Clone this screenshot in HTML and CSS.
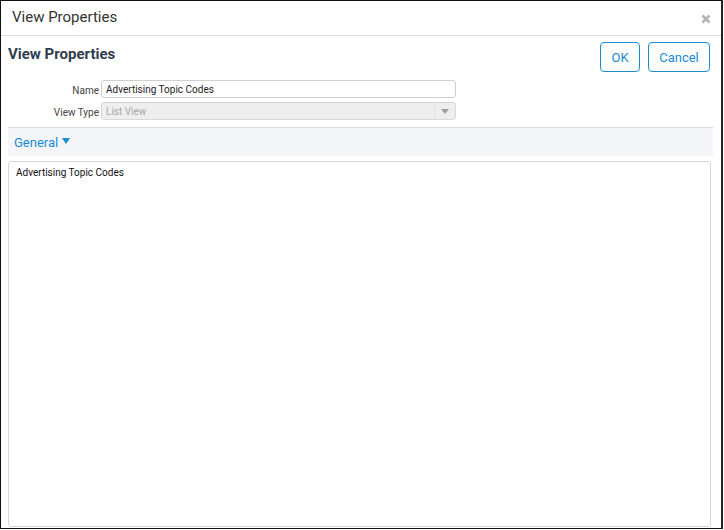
FILE: index.html
```html
<!DOCTYPE html>
<html>
<head>
<meta charset="utf-8">
<link rel="stylesheet" href="styles.css">
</head>
<body>
<div class="dialog">
  <div class="titlebar">
    <span class="title">View Properties</span>
    <span class="close"><svg width="10" height="10" viewBox="0 0 10 10"><path d="M1.5 1.5L8.5 8.5M8.5 1.5L1.5 8.5" stroke="#b3b3b3" stroke-width="2.6" stroke-linecap="butt"/></svg></span>
  </div>
  <div class="content">
    <div class="head">
      <h1 class="heading">View Properties</h1>
      <div class="actions">
        <button class="btn ok">OK</button>
        <button class="btn cancel">Cancel</button>
      </div>
    </div>
    <div class="form">
      <div class="row">
        <label class="label">Name</label>
        <div class="input">Advertising Topic Codes</div>
      </div>
      <div class="row">
        <label class="label">View Type</label>
        <div class="select">
          <span class="sel-text">List View</span>
          <span class="sel-arrow"><svg width="8" height="5" viewBox="0 0 8 5"><path d="M0 0h8L4 5z" fill="#a0a0a0"/></svg></span>
        </div>
      </div>
    </div>
    <div class="section">
      <span class="section-title">General</span>
      <svg class="caret" width="8" height="6" viewBox="0 0 8 6"><path d="M0 0h8L4 6z" fill="#1a8cd0"/></svg>
    </div>
    <div class="textarea">Advertising Topic Codes</div>
  </div>
</div>
</body>
</html>
```

FILE: styles.css
```css
html, body {
  margin: 0;
  padding: 0;
  background: #fff;
}
body {
  font-family: Roboto, "Liberation Sans", sans-serif;
}
.dialog {
  box-sizing: border-box;
  width: 723px;
  height: 529px;
  border: 1px solid #111;
  border-right: 2px solid #222;
  display: flex;
  flex-direction: column;
  background: #fff;
}
.titlebar {
  height: 34px;
  border-bottom: 1px solid #dedede;
  display: flex;
  align-items: center;
  justify-content: space-between;
  padding: 0 10px 0 11px;
  flex: none;
}
.title {
  font-size: 15px;
  color: #333;
  position: relative;
  top: -1px;
}
.close {
  display: flex;
  position: relative;
  top: 1px;
}
.content {
  flex: 1;
  display: flex;
  flex-direction: column;
  padding: 6px 11px 1px 7px;
  min-height: 0;
}
.head {
  display: flex;
  justify-content: space-between;
  align-items: flex-start;
  height: 38px;
}
.heading {
  margin: 3px 0 0 0;
  font-size: 15px;
  font-weight: bold;
  color: #2f3d4e;
}
.actions {
  display: flex;
  gap: 8px;
}
.btn {
  font-family: Roboto, "Liberation Sans", sans-serif;
  font-size: 13px;
  color: #1a8cd0;
  background: #fff;
  border: 1px solid #1a8cd0;
  border-radius: 4px;
  height: 30px;
  padding: 0;
  margin: 0;
}
.btn.ok { width: 40px; }
.btn.cancel { width: 62px; }
.form {
  display: flex;
  flex-direction: column;
  gap: 4px;
}
.row {
  display: flex;
  align-items: center;
  gap: 2px;
}
.label {
  width: 91px;
  text-align: right;
  font-size: 10px;
  color: #444;
  padding-top: 2px;
}
.input, .select {
  box-sizing: border-box;
  width: 355px;
  height: 18px;
  border: 1px solid #cfcfcf;
  border-radius: 3px;
  font-size: 10px;
  display: flex;
  align-items: center;
}
.input {
  padding-left: 4px;
  color: #222;
}
.select {
  background: #eeeeee;
  justify-content: space-between;
  color: #a8a8a8;
  border-color: #d8d8d8;
}
.sel-text {
  padding-left: 4px;
}
.sel-arrow {
  width: 20px;
  height: 100%;
  border-left: 1px solid #e4e4e4;
  display: flex;
  align-items: center;
  justify-content: center;
}
.section {
  margin-top: 7px;
  height: 28px;
  border-top: 1px solid #dcdcdc;
  background: #f4f5f9;
  display: flex;
  align-items: center;
  padding-left: 6px;
  gap: 4px;
  margin-right: -3px;
  flex: none;
}
.section-title {
  font-size: 13px;
  color: #1a8cd0;
}
.caret {
  position: relative;
  top: -1px;
}
.textarea {
  margin-top: 5px;
  flex: 1;
  margin-right: -1px;
  border: 1px solid #d6d6d6;
  border-radius: 3px;
  padding: 5px 7px;
  font-size: 10px;
  color: #111;
}
```
